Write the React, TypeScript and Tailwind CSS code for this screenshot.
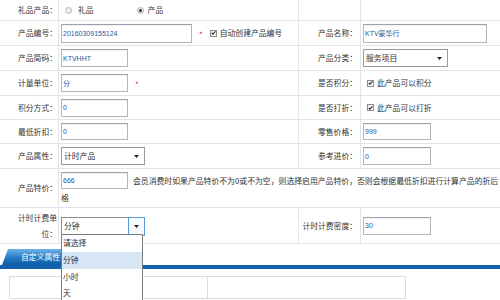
import React from "react";

const L1 =
  "w-[59px] shrink-0 border-r border-[#dfe5eb] flex items-center justify-end pr-[1px]";
const V1 =
  "w-[240px] shrink-0 border-r border-[#dfe5eb] flex items-center pl-[2px]";
const L2 =
  "w-[62px] shrink-0 border-r border-[#dfe5eb] flex items-center justify-end pr-[3px]";
const V2 = "flex-1 flex items-center pl-[2px]";

function Input({ value, w, h }: { value: string; w: string; h: string }) {
  return (
    <div
      className={`${w} ${h} shrink-0 border border-[#b3b6ba] border-t-[#9ea1a5] bg-white flex items-center pl-[1px] text-[7px] text-[#2b5797] font-['Liberation_Sans','Noto_Sans_CJK_SC',sans-serif] shadow-[inset_0_1px_1px_rgba(0,0,0,0.06)]`}
    >
      {value}
    </div>
  );
}

function Arrow() {
  return (
    <svg width="5" height="3" viewBox="0 0 5 3">
      <path d="M0 0 H5 L2.5 3 Z" fill="#222" />
    </svg>
  );
}

function Select({ value, w }: { value: string; w: string }) {
  return (
    <div
      className={`${w} h-[18px] shrink-0 border border-[#9a9a9a] bg-white flex items-center justify-between pl-[2px]`}
    >
      <span>{value}</span>
      <span className="w-[16px] flex items-center justify-center">
        <Arrow />
      </span>
    </div>
  );
}

function Check() {
  return (
    <span className="w-[7px] h-[7px] shrink-0 border border-[#8d8d8d] bg-[#f4f4f4] inline-flex items-center justify-center">
      <svg width="6" height="6" viewBox="0 0 6 6">
        <path d="M0.9 2.9 L2.3 4.5 L5.3 0.9" stroke="#1a1a1a" strokeWidth="1.3" fill="none" />
      </svg>
    </span>
  );
}

function Radio({ checked }: { checked?: boolean }) {
  return (
    <span className="w-[7px] h-[7px] shrink-0 rounded-full border border-[#b4b4b4] bg-[#eeeeee] inline-flex items-center justify-center">
      {checked ? <span className="w-[3px] h-[3px] rounded-full bg-[#333]" /> : null}
    </span>
  );
}

function Star() {
  return <span className="text-[#e02020] text-[8px] leading-none">*</span>;
}

export default function App() {
  return (
    <div className="w-[500px] h-[300px] overflow-hidden bg-white relative text-[7.8px] text-[#333] leading-none font-['Noto_Sans_CJK_SC',sans-serif]">
      {/* row 1 */}
      <div className="flex h-[21px] border-b border-[#dfe5eb]">
        <div className={L1}>礼品产品：</div>
        <div className={V1}>
          <span className="ml-[4px] flex items-center">
            <Radio />
          </span>
          <span className="ml-[6px]">礼品</span>
          <span className="ml-[43px] flex items-center">
            <Radio checked />
          </span>
          <span className="ml-[4px]">产品</span>
        </div>
        <div className={L2}></div>
        <div className={V2}></div>
      </div>

      {/* row 2 */}
      <div className="flex h-[25px] border-b border-[#dfe5eb]">
        <div className={L1}>产品编号：</div>
        <div className={V1}>
          <Input value="20160309155124" w="w-[131px]" h="h-[19px]" />
          <span className="ml-[7px] mt-[3px]">
            <Star />
          </span>
          <span className="ml-[7px] flex items-center">
            <Check />
          </span>
          <span className="ml-[3px]">自动创建产品编号</span>
        </div>
        <div className={L2}>产品名称：</div>
        <div className={V2}>
          <Input value="KTV豪华行" w="w-[124px]" h="h-[19px]" />
        </div>
      </div>

      {/* row 3 */}
      <div className="flex h-[25px] border-b border-[#dfe5eb]">
        <div className={L1}>产品简码：</div>
        <div className={V1}>
          <Input value="KTVHHT" w="w-[67px]" h="h-[18px]" />
        </div>
        <div className={L2}>产品分类：</div>
        <div className={V2}>
          <Select value="服务项目" w="w-[85px]" />
        </div>
      </div>

      {/* row 4 */}
      <div className="flex h-[25px] border-b border-[#dfe5eb]">
        <div className={L1}>计量单位：</div>
        <div className={V1}>
          <Input value="分" w="w-[67px]" h="h-[18px]" />
          <span className="ml-[7px] mt-[3px]">
            <Star />
          </span>
        </div>
        <div className={L2}>是否积分：</div>
        <div className={V2}>
          <span className="ml-[4px] flex items-center">
            <Check />
          </span>
          <span className="ml-[3px]">此产品可以积分</span>
        </div>
      </div>

      {/* row 5 */}
      <div className="flex h-[24px] border-b border-[#dfe5eb]">
        <div className={L1}>积分方式：</div>
        <div className={V1}>
          <Input value="0" w="w-[67px]" h="h-[18px]" />
        </div>
        <div className={L2}>是否打折：</div>
        <div className={V2}>
          <span className="ml-[4px] flex items-center">
            <Check />
          </span>
          <span className="ml-[3px]">此产品可以打折</span>
        </div>
      </div>

      {/* row 6 */}
      <div className="flex h-[24px] border-b border-[#dfe5eb]">
        <div className={L1}>最低折扣：</div>
        <div className={V1}>
          <Input value="0" w="w-[67px]" h="h-[17px]" />
        </div>
        <div className={L2}>零售价格：</div>
        <div className={V2}>
          <Input value="999" w="w-[68px]" h="h-[17px]" />
        </div>
      </div>

      {/* row 7 */}
      <div className="flex h-[25px] border-b border-[#dfe5eb]">
        <div className={L1}>产品属性：</div>
        <div className={V1}>
          <Select value="计时产品" w="w-[84px]" />
        </div>
        <div className={L2}>参考进价：</div>
        <div className={V2}>
          <Input value="0" w="w-[68px]" h="h-[18px]" />
        </div>
      </div>

      {/* row 8 */}
      <div className="flex h-[39px] border-b border-[#dfe5eb]">
        <div className={L1}>产品特价：</div>
        <div className="flex-1 pl-[2px] pt-[3px] whitespace-nowrap overflow-hidden">
          <div className="flex items-center h-[17px]">
            <Input value="666" w="w-[67px]" h="h-[17px]" />
            <span className="ml-[5px] text-[7.85px]">
              会员消费时如果产品特价不为0或不为空，则选择启用产品特价，否则会根据最低折扣进行计算产品的折后
            </span>
          </div>
          <div className="h-[17px] flex items-center">格</div>
        </div>
      </div>

      {/* row 9 */}
      <div className="flex h-[36px] border-b border-[#dfe5eb] relative z-10">
        <div className={L1}>
          <div className="text-right leading-[16px]">
            计时计费单
            <br />
            位：
          </div>
        </div>
        <div className={V1}>
          <div className="relative w-[84px] h-[18px] shrink-0">
            <div className="w-[84px] h-[18px] border border-[#8c8c8c] bg-white flex items-center pl-[2px]">
              <span>分钟</span>
            </div>
            <div className="absolute right-0 top-0 w-[17px] h-[19px] border border-[#5b9bd5] bg-[#f7fbfe] flex items-center justify-center">
              <Arrow />
            </div>
            <div className="absolute left-0 top-[17px] w-[82px] h-[70px] border border-[#7b7b7b] bg-white">
              <div className="h-[17px] flex items-center pl-[1px]">请选择</div>
              <div className="h-[17px] flex items-center pl-[1px] bg-[#d7e6f4]">分钟</div>
              <div className="h-[17px] flex items-center pl-[1px]">小时</div>
              <div className="h-[15px] flex items-center pl-[1px]">天</div>
            </div>
          </div>
        </div>
        <div className={L2}>计时计费密度：</div>
        <div className={V2}>
          <Input value="30" w="w-[68px]" h="h-[18px]" />
        </div>
      </div>

      {/* tab bar */}
      <div className="mt-[5px]">
        <div className="ml-[2px] w-[95px] h-[16px] flex items-center pl-[19px] text-white bg-gradient-to-b from-[#6db2e8] via-[#2a7fc8] to-[#0c5aa4] [clip-path:polygon(6px_0,calc(100%-4px)_0,100%_100%,0_100%)]">
          自定义属性
        </div>
        <div className="h-[4px] bg-[#1462ab]" />
      </div>

      {/* table below */}
      <div className="mt-[7px] ml-[9px] w-[397px] h-[23px] border border-[#dcdcdc] flex">
        <div className="w-[198px] border-r border-[#dcdcdc]" />
        <div className="flex-1" />
      </div>
    </div>
  );
}
